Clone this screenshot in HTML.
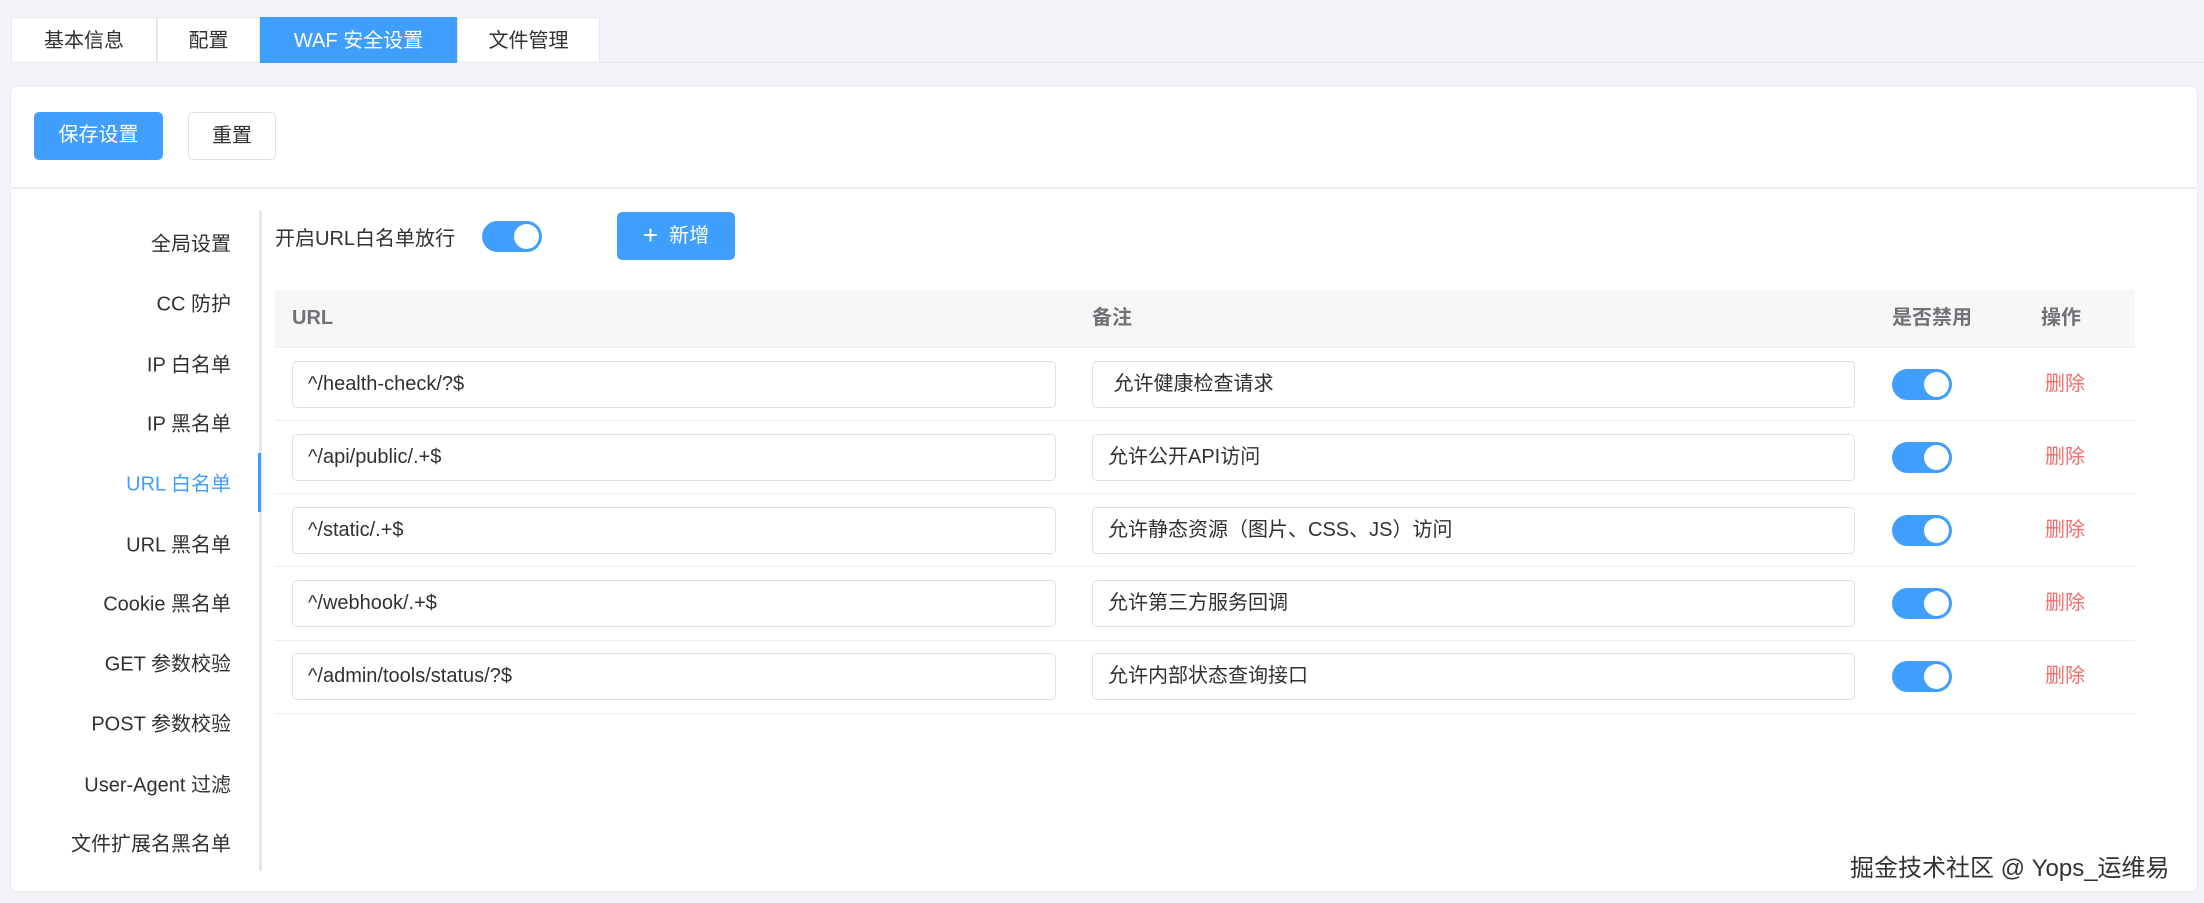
<!DOCTYPE html>
<html><head><meta charset="utf-8"><style>
*{box-sizing:border-box;margin:0;padding:0}
body{width:2204px;height:903px;background:#f2f4f7;font-family:"Liberation Sans","Noto Sans CJK SC",sans-serif;color:#606266;position:relative;overflow:hidden;font-size:20px}
.abs{position:absolute}
.tab{position:absolute;top:17px;height:46px;line-height:46px;text-align:center;background:#fff;border:1px solid #e4e7ed;color:#303133;font-size:20px}
.card{position:absolute;left:11px;top:87px;width:2186px;height:804px;background:#fff;border-radius:6px;box-shadow:0 1px 4px rgba(0,0,0,.05)}
.btn{position:absolute;height:48px;line-height:46px;text-align:center;border-radius:5px;font-size:20px}
.menu{position:absolute;right:1973px;font-size:20px;color:#303133;white-space:nowrap;transform:translateY(-50%)}
.sw{position:absolute;width:60px;height:31px;border-radius:16px;background:#409eff}
.sw::after{content:"";position:absolute;right:3px;top:3px;width:25px;height:25px;border-radius:50%;background:#fff}
.inp{position:absolute;height:47px;border:1px solid #dcdfe6;border-radius:5px;line-height:45px;padding-left:15px;color:#303133;font-size:20px;white-space:nowrap}
.hline{position:absolute;left:275px;width:1860px;height:1px;background:#ebeef5}
.del{position:absolute;left:2045px;color:#f56c6c;font-size:20px;line-height:30px}
.th{position:absolute;top:0;line-height:57px;height:57px}
</style></head><body>
<div class="abs" style="left:11px;top:62px;width:2193px;height:1px;background:#e4e7ed"></div>
<div class="tab" style="left:11px;width:146px">基本信息</div>
<div class="tab" style="left:157px;width:103px">配置</div>
<div class="tab" style="left:260px;width:197px;background:#409eff;color:#fff;border-color:#409eff">WAF 安全设置</div>
<div class="tab" style="left:457px;width:143px">文件管理</div>

<div class="card"></div>
<div class="btn" style="left:34px;top:112px;width:129px;background:#409eff;color:#fff">保存设置</div>
<div class="btn" style="left:188px;top:112px;width:88px;border:1px solid #dcdfe6;color:#303133;background:#fff">重置</div>
<div class="abs" style="left:11px;top:187px;width:2186px;height:2px;background:#ebeef5"></div>

<div class="abs" style="left:259px;top:211px;width:3px;height:660px;background:#e4e7ed"></div>
<div class="abs" style="left:258px;top:453px;width:3px;height:59px;background:#409eff"></div>
<div class="menu" style="top:242px">全局设置</div>
<div class="menu" style="top:302px">CC 防护</div>
<div class="menu" style="top:363px">IP 白名单</div>
<div class="menu" style="top:422px">IP 黑名单</div>
<div class="menu" style="top:482px;color:#409eff">URL 白名单</div>
<div class="menu" style="top:543px">URL 黑名单</div>
<div class="menu" style="top:602px">Cookie 黑名单</div>
<div class="menu" style="top:662px">GET 参数校验</div>
<div class="menu" style="top:722px">POST 参数校验</div>
<div class="menu" style="top:783px">User-Agent 过滤</div>
<div class="menu" style="top:842px">文件扩展名黑名单</div>

<div class="abs" style="left:275px;top:222px;color:#303133">开启URL白名单放行</div>
<div class="sw" style="left:482px;top:221px"></div>
<div class="btn" style="left:617px;top:212px;width:118px;background:#409eff;color:#fff"><span style="font-size:26px;vertical-align:-2px">+</span>&nbsp; 新增</div>

<div class="abs" style="left:275px;top:290px;width:1860px;height:57px;background:#f7f7f7;font-weight:bold;color:#707277;font-size:20px">
<span class="th" style="left:17px">URL</span>
<span class="th" style="left:817px">备注</span>
<span class="th" style="left:1617px">是否禁用</span>
<span class="th" style="left:1766px">操作</span>
</div>
<div class="hline" style="top:347px"></div>

<div class="inp" style="left:292px;top:361px;width:764px">^/health-check/?$</div>
<div class="inp" style="left:1092px;top:361px;width:763px">&nbsp;允许健康检查请求</div>
<div class="sw" style="left:1892px;top:369px"></div>
<div class="del" style="top:369px">删除</div>
<div class="hline" style="top:420px"></div>

<div class="inp" style="left:292px;top:434px;width:764px">^/api/public/.+$</div>
<div class="inp" style="left:1092px;top:434px;width:763px">允许公开API访问</div>
<div class="sw" style="left:1892px;top:442px"></div>
<div class="del" style="top:442px">删除</div>
<div class="hline" style="top:493px"></div>

<div class="inp" style="left:292px;top:507px;width:764px">^/static/.+$</div>
<div class="inp" style="left:1092px;top:507px;width:763px">允许静态资源（图片、CSS、JS）访问</div>
<div class="sw" style="left:1892px;top:515px"></div>
<div class="del" style="top:515px">删除</div>
<div class="hline" style="top:566px"></div>

<div class="inp" style="left:292px;top:580px;width:764px">^/webhook/.+$</div>
<div class="inp" style="left:1092px;top:580px;width:763px">允许第三方服务回调</div>
<div class="sw" style="left:1892px;top:588px"></div>
<div class="del" style="top:588px">删除</div>
<div class="hline" style="top:640px"></div>

<div class="inp" style="left:292px;top:653px;width:764px">^/admin/tools/status/?$</div>
<div class="inp" style="left:1092px;top:653px;width:763px">允许内部状态查询接口</div>
<div class="sw" style="left:1892px;top:661px"></div>
<div class="del" style="top:661px">删除</div>
<div class="hline" style="top:713px"></div>

<div class="abs" style="left:1850px;top:848px;font-size:24px;color:#333;white-space:nowrap;text-shadow:0 0 2px #fff">掘金技术社区 @ Yops_运维易</div>
</body></html>
